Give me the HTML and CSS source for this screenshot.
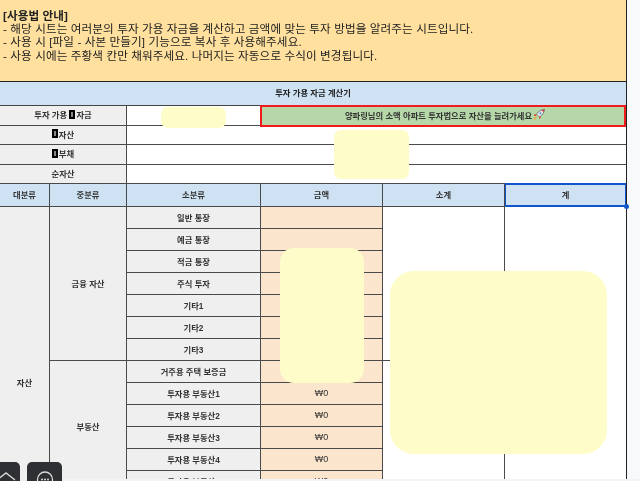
FILE: index.html
```html
<!DOCTYPE html>
<html lang="ko">
<head>
<meta charset="utf-8">
<title>투자 가용 자금 계산기</title>
<link rel="stylesheet" href="styles.css">
</head>
<body>
<main class="sheet">
  <section class="notice">
    <strong>[사용법 안내]</strong><br>
    - 해당 시트는 여러분의 투자 가용 자금을 계산하고 금액에 맞는 투자 방법을 알려주는 시트입니다.<br>
    - 사용 시 [파일 - 사본 만들기] 기능으로 복사 후 사용해주세요.<br>
    - 사용 시에는 주황색 칸만 채워주세요. 나머지는 자동으로 수식이 변경됩니다.
  </section>
  <div class="title">투자 가용 자금 계산기</div>
  <div class="summary">
    <div class="c label">투자 가용&nbsp;<i class="tofu"></i>자금</div>
    <div class="c val"></div>
    <div class="c promo">양파링님의 소액 아파트 투자법으로 자산을 늘려가세요
      <svg class="rocket" width="12" height="11" viewBox="0 0 12 11"><path d="M11.5 .5C8.5.7 5.5 2 3.5 5l3 3c3-2 4.600-4.500 5-7.500z" fill="#e8eaee" stroke="#555" stroke-width=".7"/><path d="M11.500 .5 8.500 1.300l1.800 1.800z" fill="#d33"/><circle cx="7.400" cy="4.300" r="1" fill="#4a90d9"/><path d="M3.500 5 1.500 5.500.8 7l2.200-.3zM6.500 8 6 10l1.600-1 .3-2z" fill="#d33"/><path d="M3.500 7.500 1 10.500" stroke="#f2a33a" stroke-width="1.300"/></svg>
    </div>
    <div class="c label"><i class="tofu"></i>자산</div>
    <div class="c val wide"></div>
    <div class="c label"><i class="tofu"></i>부채</div>
    <div class="c val wide"></div>
    <div class="c label">순자산</div>
    <div class="c val wide"></div>
  </div>
  <div class="grid">
    <div class="c head">대분류</div>
    <div class="c head">중분류</div>
    <div class="c head">소분류</div>
    <div class="c head">금액</div>
    <div class="c head">소계</div>
    <div class="c head selected">계</div>

    <div class="c major">자산</div>
    <div class="c mid fin">금융 자산</div>
    <div class="c mid estate">부동산</div>
    <div class="c subtotal fin"></div>
    <div class="c subtotal estate"></div>
    <div class="c total"></div>

    <div class="c item">일반 통장</div><div class="c amt"></div>
    <div class="c item">예금 통장</div><div class="c amt"></div>
    <div class="c item">적금 통장</div><div class="c amt"></div>
    <div class="c item">주식 투자</div><div class="c amt"></div>
    <div class="c item">기타1</div><div class="c amt"></div>
    <div class="c item">기타2</div><div class="c amt"></div>
    <div class="c item">기타3</div><div class="c amt"></div>
    <div class="c item">거주용 주택 보증금</div><div class="c amt"></div>
    <div class="c item">투자용 부동산1</div><div class="c amt">₩0</div>
    <div class="c item">투자용 부동산2</div><div class="c amt">₩0</div>
    <div class="c item">투자용 부동산3</div><div class="c amt">₩0</div>
    <div class="c item">투자용 부동산4</div><div class="c amt">₩0</div>
    <div class="c item">투자용 부동산5</div><div class="c amt">₩0</div>
  </div>
  <span class="handle"></span>
</main>
<div class="patch p1"></div>
<div class="patch p2"></div>
<div class="patch p3"></div>
<div class="patch p4"></div>
<div class="footer"></div>
<div class="float f1">
  <svg width="24" height="16" viewBox="0 0 24 16"><path d="M3 15l9-7 9 7" fill="none" stroke="#d8d8d8" stroke-width="1.400"/></svg>
</div>
<div class="float f2">
  <svg width="22" height="24" viewBox="0 0 22 24"><circle cx="11" cy="14.500" r="7.500" fill="none" stroke="#d8d8d8" stroke-width="1.300"/><circle cx="8" cy="14.500" r="1" fill="#d8d8d8"/><circle cx="11" cy="14.500" r="1" fill="#d8d8d8"/><circle cx="14" cy="14.500" r="1" fill="#d8d8d8"/></svg>
</div>
</body>
</html>
```
FILE: styles.css
```css
* { box-sizing: border-box; }
html, body { margin: 0; height: 481px; overflow: hidden; }
body {
  background: #f8f9fa;
  font-family: "Liberation Sans", "Noto Sans CJK KR", sans-serif;
  color: #222;
  position: relative;
}
.sheet {
  width: 627px;
  position: relative;
  border-right: 1px solid #222;
  filter: blur(0.3px);
}
.notice {
  height: 82px;
  background: #ffe09e;
  border-bottom: 1px solid #222;
  padding: 9px 3px 0;
  font-size: 11.6px;
  line-height: 13.2px;
  letter-spacing: 0.1px;
}
.title {
  height: 24px;
  padding-bottom: 3px;
  background: #cfe2f3;
  border-bottom: 1px solid #444;
  display: flex;
  align-items: center;
  justify-content: center;
  font-size: 8.3px;
  font-weight: 700;
}
.c {
  display: flex;
  align-items: center;
  justify-content: center;
  padding-bottom: 1px;
  font-size: 8.3px;
  font-weight: 700;
  color: #333;
  border-bottom: 1px solid #4a4a4a;
  border-right: 1px solid #4a4a4a;
  min-width: 0;
}
.tofu {
  display: inline-block;
  width: 6px;
  height: 9px;
  margin-right: 1px;
  background: #888;
  border: 2px solid #000;
}
.summary {
  display: grid;
  grid-template-columns: 127px 134px 1fr;
  grid-template-rows: 20px 19px 20px 19px;
  background: #fff;
}
.summary .c { padding-bottom: 3px; }
.label { background: #efefef; }
.val { background: #fff; border-right: 0; }
.wide { grid-column: span 2; }
.summary .promo {
  background: #b6d7a8;
  border: 2px solid #f01c1c;
  margin: -1px 0 -1px -1px;
  padding-left: 4px;
  position: relative;
}
.rocket { margin-left: 1px; }
.grid {
  display: grid;
  grid-template-columns: 50px 77px 134px 122px 122px 121px;
  grid-template-rows: 23px repeat(13, 22px);
  background: #fff;
}
.head { background: #cfe2f3; padding-bottom: 2px; }
.selected {
  box-shadow: 0 -1px 0 #1155cc, inset 0 0 0 1px #1155cc;
  border-right: 0;
  border-bottom-color: #1155cc;
  position: relative;
}
.major {
  background: #efefef;
  grid-column: 1;
  grid-row: 2 / span 13;
  padding-top: 64px;
  border-bottom: 0;
}
.mid { background: #efefef; grid-column: 2; }
.fin { grid-row: 2 / span 7; }
.estate { grid-row: 9 / span 6; }
.subtotal { grid-column: 5; background: #fff; }
.total { grid-column: 6; grid-row: 2 / span 13; border: 0; }
.item { background: #efefef; grid-column: 3; }
.amt { background: #fce5cd; grid-column: 4; font-weight: 400; font-size: 9px; }
.handle {
  position: absolute;
  left: 624px;
  top: 204px;
  width: 5px;
  height: 5px;
  background: #1155cc;
  border-radius: 50%;
}
.patch { position: absolute; background: #fefdca; }
.p1 { left: 161px; top: 107px; width: 65px; height: 21px; border-radius: 7px; }
.p2 { left: 334px; top: 130px; width: 75px; height: 49px; border-radius: 7px; }
.p3 { left: 280px; top: 248px; width: 84px; height: 135px; border-radius: 14px; }
.p4 { left: 390px; top: 271px; width: 217px; height: 183px; border-radius: 24px; }
.float {
  position: absolute;
  top: 462px;
  height: 26px;
  background: #2f3033;
  border-radius: 5px;
  display: flex;
  justify-content: center;
  padding-top: 3px;
}
.f1 { left: -8px; width: 28px; }
.f2 { left: 27px; width: 35px; }
.footer { position: absolute; left: 62px; right: 0; top: 479px; height: 2px; background: #f1f3f4; }
```
